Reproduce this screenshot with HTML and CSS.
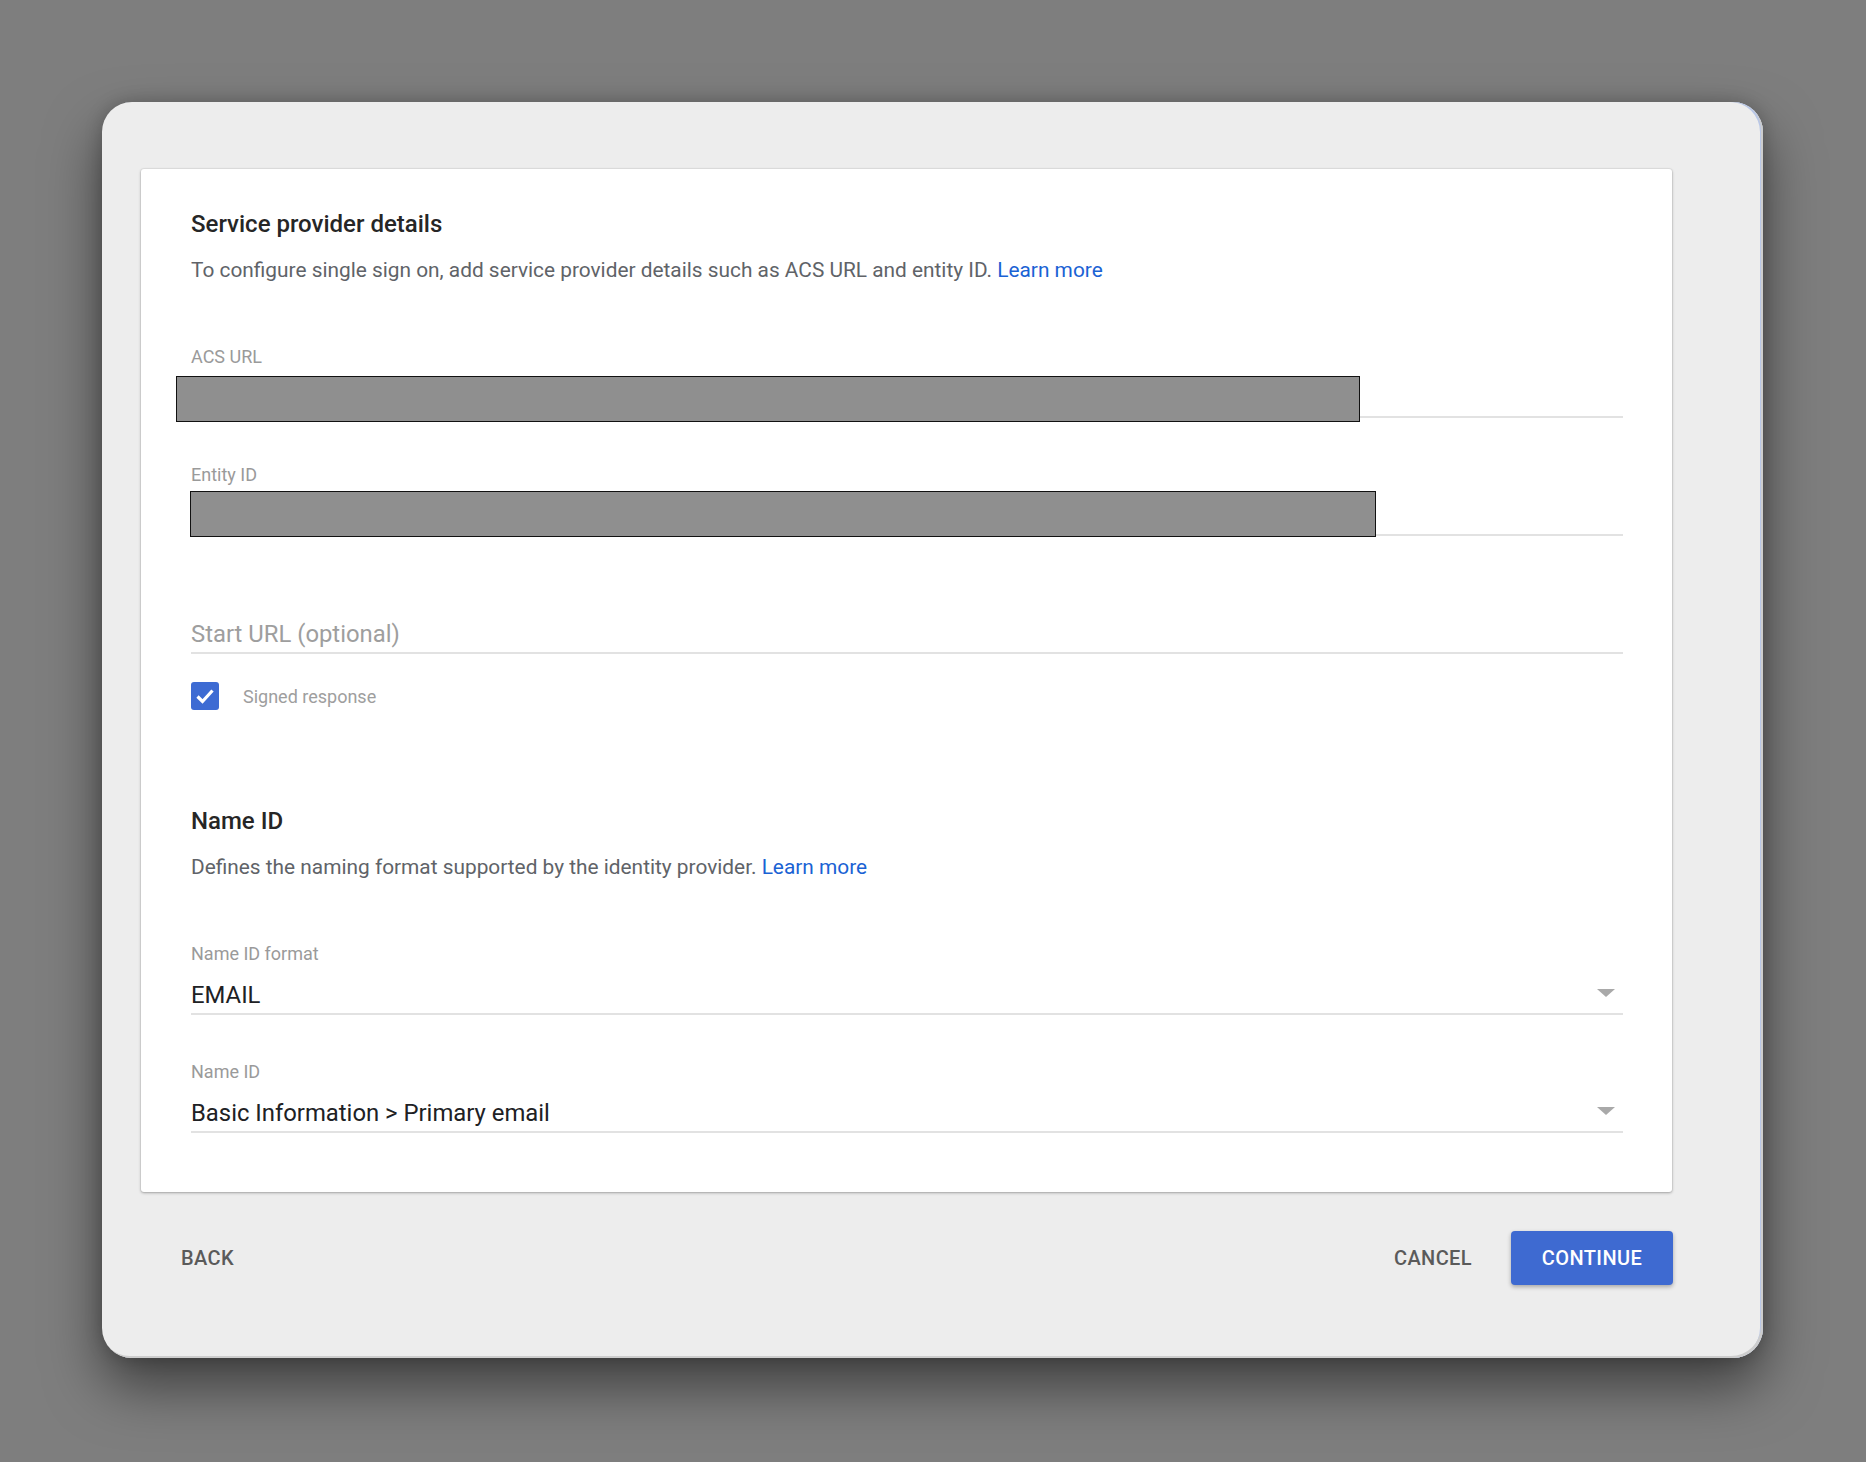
FILE: index.html
```html
<!DOCTYPE html>
<html lang="en">
<head>
    <meta charset="UTF-8">
    <meta name="viewport" content="width=device-width, initial-scale=1.0">
    <title>Service provider details</title>
    <link rel="stylesheet" href="styles.css">
</head>
<body>
    <div class="dialog">
        <div class="card">
            <h2 class="section-title">Service provider details</h2>
            <p class="section-desc">To configure single sign on, add service provider details such as ACS URL and entity ID. <a href="#">Learn more</a></p>

            <div class="field field-first">
                <div class="field-label">ACS URL</div>
                <div class="field-input">
                    <div class="redact redact-acs"></div>
                </div>
            </div>

            <div class="field">
                <div class="field-label">Entity ID</div>
                <div class="field-input">
                    <div class="redact redact-entity"></div>
                </div>
            </div>

            <div class="field field-nolabel">
                <div class="field-input placeholder">Start URL (optional)</div>
            </div>

            <label class="checkbox-row">
                <span class="checkbox">
                    <svg width="24" height="24" viewBox="0 0 24 24"><path d="M4.5 12.5 L9.5 17.5 L19.5 6.5" fill="none" stroke="#fff" stroke-width="3.2"/></svg>
                </span>
                <span class="checkbox-text">Signed response</span>
            </label>

            <h2 class="section-title title-second">Name ID</h2>
            <p class="section-desc">Defines the naming format supported by the identity provider. <a href="#">Learn more</a></p>

            <div class="field field-first">
                <div class="field-label">Name ID format</div>
                <div class="field-input select">EMAIL<span class="arrow"></span></div>
            </div>

            <div class="field">
                <div class="field-label">Name ID</div>
                <div class="field-input select">Basic Information &gt; Primary email<span class="arrow"></span></div>
            </div>
        </div>

        <div class="footer">
            <button class="btn-text">BACK</button>
            <div class="footer-right">
                <button class="btn-text">CANCEL</button>
                <button class="btn-primary">CONTINUE</button>
            </div>
        </div>
    </div>
</body>
</html>
```

FILE: styles.css
```css
body {
    margin: 0;
    height: 1462px;
    overflow: hidden;
    background: #7e7e7e;
    font-family: Roboto, "Liberation Sans", Arial, sans-serif;
}
.dialog {
    box-sizing: border-box;
    margin: 102px 0 0 102px;
    width: 1661px;
    height: 1256px;
    padding: 67px 0 0 39px;
    background: #ededed;
    border-radius: 30px;
    box-shadow: inset -2px -2px 0 #cdcdcd, inset -3px 0 0 #b9c7e6, 0 28px 55px rgba(0, 0, 0, 0.5), 0 0 18px rgba(0, 0, 0, 0.2);
}
.card {
    box-sizing: border-box;
    width: 1531px;
    height: 1023px;
    padding: 41px 49px 0 50px;
    background: #fff;
    border-radius: 3px;
    box-shadow: 0 1px 3px rgba(0, 0, 0, 0.3), 0 0 0 1px rgba(0, 0, 0, 0.04);
}
.section-title {
    margin: 0;
    font-size: 24px;
    line-height: 28px;
    font-weight: 500;
    color: #262626;
}
.title-second {
    margin-top: 97px;
}
.section-desc {
    margin: 19px 0 0;
    font-size: 20.85px;
    line-height: 26px;
    color: #606368;
}
.section-desc a {
    color: #1a62d4;
    text-decoration: none;
}
.field {
    margin-top: 46px;
}
.field-first {
    margin-top: 63px;
}
.field-nolabel {
    margin-top: 68px;
}
.field-label {
    font-size: 18px;
    line-height: 22px;
    color: #9a9a9a;
}
.field-input {
    position: relative;
    display: flex;
    align-items: center;
    height: 28px;
    padding: 16px 0 4px;
    font-size: 23.85px;
    color: #202124;
    border-bottom: 2px solid #e2e2e2;
}
.placeholder {
    color: #9e9e9e;
}
.select {
    justify-content: space-between;
}
.arrow {
    width: 0;
    height: 0;
    margin: -4px 8px 0 0;
    border-left: 9px solid transparent;
    border-right: 9px solid transparent;
    border-top: 8px solid #a9a9a9;
}
.redact {
    position: absolute;
    height: 44px;
    background: #8f8f8f;
    border: 1.5px solid #111;
}
.redact-acs {
    left: -15px;
    top: 8px;
    width: 1182px;
}
.redact-entity {
    left: -1px;
    top: 5px;
    width: 1184px;
}
.checkbox-row {
    display: flex;
    align-items: center;
    margin-top: 28px;
    height: 28px;
}
.checkbox {
    display: flex;
    align-items: center;
    justify-content: center;
    width: 28px;
    height: 28px;
    border-radius: 3px;
    background: #3d6bd3;
}
.checkbox-text {
    margin-left: 24px;
    font-size: 18px;
    color: #9e9e9e;
}
.footer {
    display: flex;
    justify-content: space-between;
    align-items: center;
    width: 1532px;
    margin-top: 39px;
    padding-left: 24px;
    box-sizing: border-box;
}
.footer-right {
    display: flex;
    align-items: center;
    gap: 23px;
}
button {
    font-family: Roboto, "Liberation Sans", Arial, sans-serif;
    font-size: 20px;
    font-weight: 500;
    letter-spacing: 0.4px;
    border: none;
    cursor: pointer;
}
.btn-text {
    height: 54px;
    padding: 0 16px;
    background: transparent;
    color: #5a5a5a;
}
.btn-primary {
    width: 162px;
    height: 54px;
    background: #3e6ad1;
    color: #fff;
    border-radius: 4px;
    box-shadow: 0 2px 4px rgba(0, 0, 0, 0.3);
}
```
